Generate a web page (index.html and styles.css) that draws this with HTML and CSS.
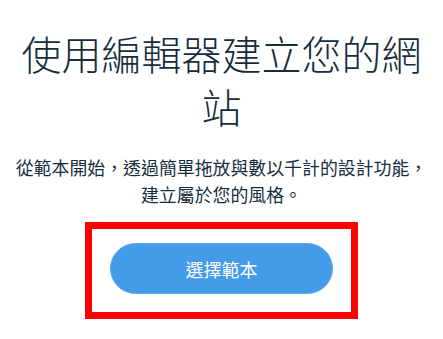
FILE: index.html
```html
<!DOCTYPE html>
<html lang="zh-Hant">
<head>
<meta charset="utf-8">
<title>使用編輯器建立您的網站</title>
<link rel="stylesheet" href="styles.css">
</head>
<body>
<main class="page">
  <h1 class="title">使用編輯器建立您的網站</h1>
  <p class="subtitle">從範本開始<span class="punct">，</span>透過簡單拖放與數以千計的設計功能<span class="punct">，</span><br>建立屬於您的風格<span class="punct">。</span></p>
  <div class="highlight">
    <button class="cta" type="button">選擇範本</button>
  </div>
</main>
</body>
</html>
```

FILE: styles.css
```css
html, body {
  margin: 0;
  padding: 0;
  background: #ffffff;
}

body {
  font-family: "Noto Sans CJK TC", "Noto Sans CJK SC", "Noto Sans", sans-serif;
  color: #162d3d;
}

.page {
  display: flex;
  flex-direction: column;
  align-items: center;
  padding: 27px 12px 0;
  text-align: center;
}

.title {
  margin: 0;
  width: 404px;
  font-size: 40px;
  line-height: 53px;
  font-weight: 300;
  color: #162d3d;
}

.subtitle {
  margin: 21px 0 0;
  white-space: nowrap;
  font-size: 17.9px;
  line-height: 27px;
  font-weight: 400;
  color: #162d3d;
}

.punct {
  font-family: "Noto Sans CJK SC", "Noto Sans CJK TC", sans-serif;
}

.highlight {
  margin-top: 14px;
  width: 241px;
  border: 7px solid #ff0000;
  padding: 14px 9px 18px;
  box-sizing: content-box;
  display: flex;
  justify-content: center;
}

.cta {
  width: 223px;
  height: 51px;
  border: 1px solid #5aa8ec;
  border-radius: 26px;
  background: #449ce8;
  color: #ffffff;
  font-family: "Noto Sans CJK TC", "Noto Sans CJK SC", "Noto Sans", sans-serif;
  font-size: 18px;
  font-weight: 400;
  line-height: 1;
  padding: 0;
  cursor: pointer;
}
```
